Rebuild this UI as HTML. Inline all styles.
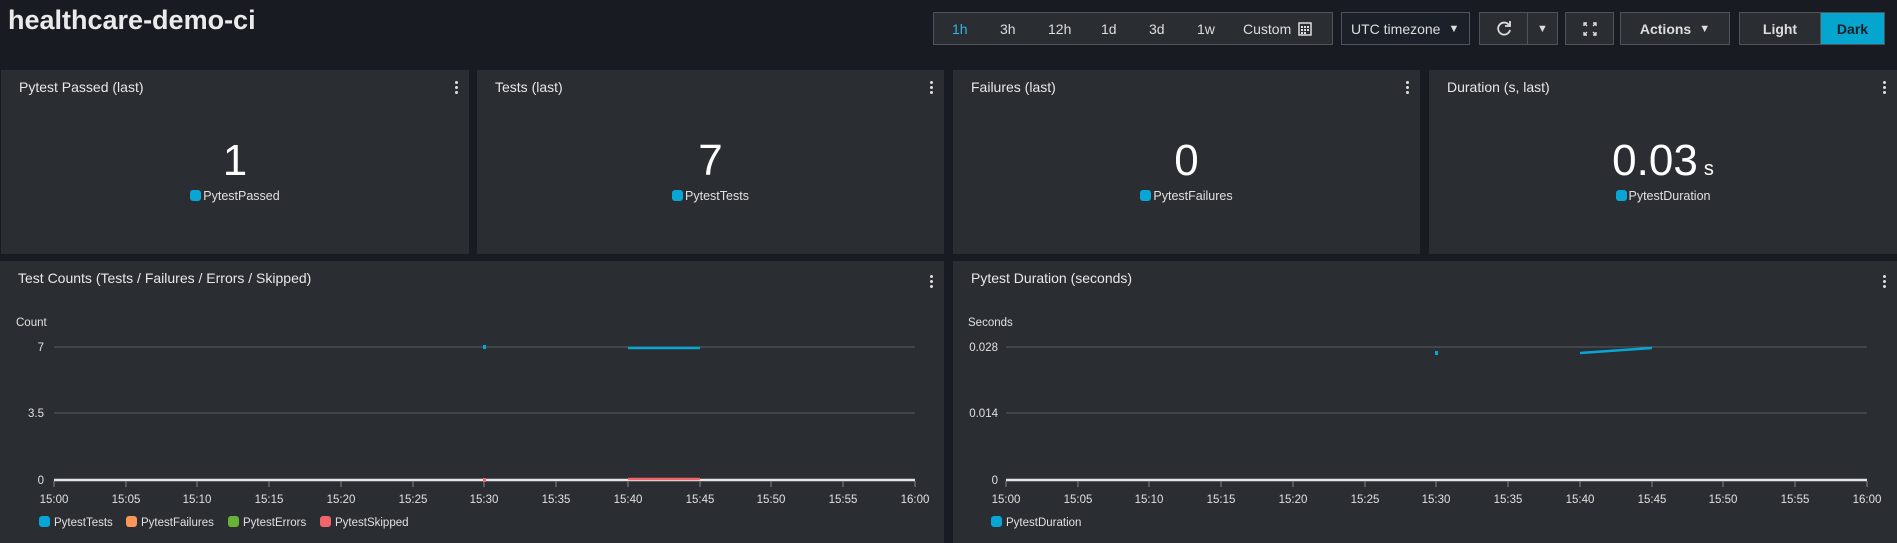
<!DOCTYPE html>
<html><head><meta charset="utf-8"><style>
*{box-sizing:border-box;margin:0;padding:0}
body{width:1897px;height:543px;background:#181b21;font-family:"Liberation Sans",sans-serif;color:#e0e0e0;position:relative;overflow:hidden}
.abs{position:absolute}
.title{left:8px;top:5px;font-size:27px;font-weight:bold;color:#eaeaea}
.btn{position:absolute;top:12px;height:33px;border:1px solid #50545a;background:#2a2d32;color:#ddd;font-size:14px;display:flex;align-items:center}
.panel{position:absolute;background:#2a2d32}
.ptitle{position:absolute;left:18px;top:9px;font-size:14px;color:#e8e8e8}
.dots{position:absolute;right:11px;top:11px;width:3px}
.dots i{display:block;width:3px;height:3px;border-radius:50%;background:#ddd;margin-bottom:2px}
.big{position:absolute;left:0;right:0;top:69px;text-align:center;font-size:44px;color:#fff;line-height:44px}
.leg{position:absolute;left:0;right:0;top:119px;text-align:center;font-size:12.5px;color:#e0e0e0}
.sq{display:inline-block;width:11px;height:11px;border-radius:3px;background:#08a6d4;vertical-align:-1px;margin-right:2px}
</style></head><body>
<div class="abs title">healthcare-demo-ci</div>

<div class="btn" style="left:933px;width:400px;padding-left:18px;gap:0">
<span style="color:#33b5e5;width:48px">1h</span><span style="width:48px">3h</span><span style="width:53px">12h</span><span style="width:48px">1d</span><span style="width:48px">3d</span><span style="width:46px">1w</span><span>Custom</span>
<svg width="14" height="14" style="margin-left:7px" viewBox="0 0 14 14"><rect x="1" y="1" width="12" height="12" fill="none" stroke="#ddd" stroke-width="1.5"/><g fill="#ddd"><rect x="3" y="4" width="2" height="2"/><rect x="6" y="4" width="2" height="2"/><rect x="9" y="4" width="2" height="2"/><rect x="3" y="7" width="2" height="2"/><rect x="6" y="7" width="2" height="2"/><rect x="9" y="7" width="2" height="2"/><rect x="3" y="10" width="2" height="2"/><rect x="6" y="10" width="2" height="2"/></g></svg>
</div>
<div class="btn" style="left:1341px;width:129px;background:#1c2129;padding-left:9px">UTC timezone <span style="margin-left:8px;font-size:11px">▼</span></div>
<div class="btn" style="left:1479px;width:79px;padding:0">
<div style="width:48px;height:100%;border-right:1px solid #50545a;display:flex;align-items:center;justify-content:center"><svg width="18" height="18" viewBox="0 0 18 18"><path d="M14 5A6 6 0 1 0 15 10" fill="none" stroke="#ddd" stroke-width="1.8"/><path d="M15 1v5h-5" fill="none" stroke="#ddd" stroke-width="1.8"/></svg></div>
<div style="flex:1;text-align:center;font-size:11px">▼</div></div>
<div class="btn" style="left:1565px;width:49px;justify-content:center"><svg width="14" height="14" viewBox="0 0 14 14" fill="none" stroke="#ddd" stroke-width="1.4"><path d="M1 4V1h3M10 1h3v3M13 10v3h-3M4 13H1v-3M1 1l3 3M13 1l-3 3M13 13l-3-3M1 13l3-3"/></svg></div>
<div class="btn" style="left:1620px;width:110px;justify-content:center;font-weight:bold">Actions <span style="margin-left:8px;font-size:11px">▼</span></div>
<div class="btn" style="left:1739px;width:146px;padding:0">
<div style="width:80px;text-align:center;font-weight:bold">Light</div>
<div style="flex:1;height:100%;background:#04a5cf;color:#1a1d22;font-weight:bold;display:flex;align-items:center;justify-content:center;border-left:1px solid #555">Dark</div></div>

<div class="panel" style="left:1px;top:70px;width:468px;height:184px"><div class="ptitle">Pytest Passed (last)</div><div class="dots"><i></i><i></i><i></i></div><div class="big">1</div><div class="leg"><span class="sq"></span>PytestPassed</div></div>
<div class="panel" style="left:477px;top:70px;width:467px;height:184px"><div class="ptitle">Tests (last)</div><div class="dots"><i></i><i></i><i></i></div><div class="big">7</div><div class="leg"><span class="sq"></span>PytestTests</div></div>
<div class="panel" style="left:953px;top:70px;width:467px;height:184px"><div class="ptitle">Failures (last)</div><div class="dots"><i></i><i></i><i></i></div><div class="big">0</div><div class="leg"><span class="sq"></span>PytestFailures</div></div>
<div class="panel" style="left:1429px;top:70px;width:468px;height:184px"><div class="ptitle">Duration (s, last)</div><div class="dots"><i></i><i></i><i></i></div><div class="big">0.03<span style="font-size:20px;margin-left:6px">s</span></div><div class="leg"><span class="sq"></span>PytestDuration</div></div>

<div class="panel" style="left:0;top:261px;width:944px;height:282px"><div class="ptitle">Test Counts (Tests / Failures / Errors / Skipped)</div><div class="dots" style="top:14px"><i></i><i></i><i></i></div></div>
<div class="panel" style="left:953px;top:261px;width:944px;height:282px"><div class="ptitle">Pytest Duration (seconds)</div><div class="dots" style="top:14px"><i></i><i></i><i></i></div></div>

<svg class="abs" style="left:0;top:0" width="1897" height="543" font-family="Liberation Sans, sans-serif" font-size="11.5" fill="#e0e0e0">
<g>
<text x="16" y="326">Count</text>
<line x1="54" y1="347" x2="915" y2="347" stroke="#5a5d62"/>
<line x1="54" y1="413" x2="915" y2="413" stroke="#5a5d62"/>
<line x1="54" y1="480" x2="915" y2="480" stroke="#e6e6e6" stroke-width="2.5"/>
<text x="44" y="351" text-anchor="end">7</text><text x="44" y="417" text-anchor="end">3.5</text><text x="44" y="484" text-anchor="end">0</text>
<g stroke="#888"><line x1="54" y1="481" x2="54" y2="487"/><line x1="126" y1="481" x2="126" y2="487"/><line x1="197" y1="481" x2="197" y2="487"/><line x1="269" y1="481" x2="269" y2="487"/><line x1="341" y1="481" x2="341" y2="487"/><line x1="413" y1="481" x2="413" y2="487"/><line x1="484" y1="481" x2="484" y2="487"/><line x1="556" y1="481" x2="556" y2="487"/><line x1="628" y1="481" x2="628" y2="487"/><line x1="700" y1="481" x2="700" y2="487"/><line x1="771" y1="481" x2="771" y2="487"/><line x1="843" y1="481" x2="843" y2="487"/><line x1="915" y1="481" x2="915" y2="487"/></g>
<g text-anchor="middle"><text x="54" y="503">15:00</text><text x="126" y="503">15:05</text><text x="197" y="503">15:10</text><text x="269" y="503">15:15</text><text x="341" y="503">15:20</text><text x="413" y="503">15:25</text><text x="484" y="503">15:30</text><text x="556" y="503">15:35</text><text x="628" y="503">15:40</text><text x="700" y="503">15:45</text><text x="771" y="503">15:50</text><text x="843" y="503">15:55</text><text x="915" y="503">16:00</text></g>
<rect x="483" y="345" width="3" height="4" fill="#08a6d4"/>
<line x1="628" y1="348" x2="700" y2="348" stroke="#08a6d4" stroke-width="2.5"/>
<rect x="483" y="478" width="3" height="4" fill="#f2656a"/>
<line x1="628" y1="479" x2="700" y2="479" stroke="#f2656a" stroke-width="2.5"/>
<rect x="39" y="516" width="11" height="11" rx="3" fill="#08a6d4"/><text x="54" y="526">PytestTests</text>
<rect x="126" y="516" width="11" height="11" rx="3" fill="#fa9658"/><text x="141" y="526">PytestFailures</text>
<rect x="228" y="516" width="11" height="11" rx="3" fill="#66b437"/><text x="243" y="526">PytestErrors</text>
<rect x="320" y="516" width="11" height="11" rx="3" fill="#f2656a"/><text x="335" y="526">PytestSkipped</text>
</g>
<g>
<text x="968" y="326">Seconds</text>
<line x1="1006" y1="347" x2="1867" y2="347" stroke="#5a5d62"/>
<line x1="1006" y1="413" x2="1867" y2="413" stroke="#5a5d62"/>
<line x1="1006" y1="480" x2="1867" y2="480" stroke="#e6e6e6" stroke-width="2.5"/>
<text x="998" y="351" text-anchor="end">0.028</text><text x="998" y="417" text-anchor="end">0.014</text><text x="998" y="484" text-anchor="end">0</text>
<g stroke="#888"><line x1="1006" y1="481" x2="1006" y2="487"/><line x1="1078" y1="481" x2="1078" y2="487"/><line x1="1149" y1="481" x2="1149" y2="487"/><line x1="1221" y1="481" x2="1221" y2="487"/><line x1="1293" y1="481" x2="1293" y2="487"/><line x1="1365" y1="481" x2="1365" y2="487"/><line x1="1436" y1="481" x2="1436" y2="487"/><line x1="1508" y1="481" x2="1508" y2="487"/><line x1="1580" y1="481" x2="1580" y2="487"/><line x1="1652" y1="481" x2="1652" y2="487"/><line x1="1723" y1="481" x2="1723" y2="487"/><line x1="1795" y1="481" x2="1795" y2="487"/><line x1="1867" y1="481" x2="1867" y2="487"/></g>
<g text-anchor="middle"><text x="1006" y="503">15:00</text><text x="1078" y="503">15:05</text><text x="1149" y="503">15:10</text><text x="1221" y="503">15:15</text><text x="1293" y="503">15:20</text><text x="1365" y="503">15:25</text><text x="1436" y="503">15:30</text><text x="1508" y="503">15:35</text><text x="1580" y="503">15:40</text><text x="1652" y="503">15:45</text><text x="1723" y="503">15:50</text><text x="1795" y="503">15:55</text><text x="1867" y="503">16:00</text></g>
<rect x="1435" y="351" width="3" height="4" fill="#08a6d4"/>
<line x1="1580" y1="353" x2="1652" y2="348" stroke="#08a6d4" stroke-width="2.5"/>
<rect x="991" y="516" width="11" height="11" rx="3" fill="#08a6d4"/><text x="1006" y="526">PytestDuration</text>
</g>
</svg>
</body></html>
